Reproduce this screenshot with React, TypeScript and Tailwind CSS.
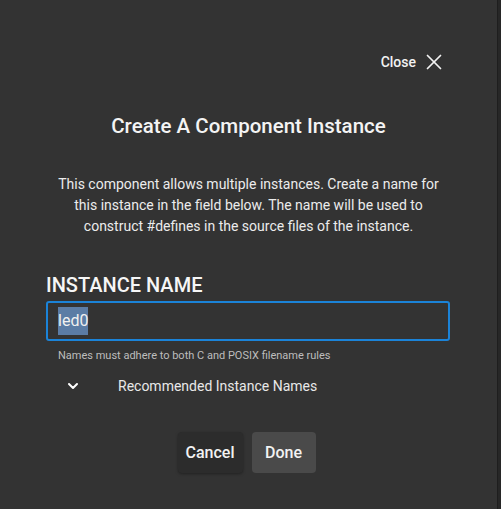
import { X, ChevronDown } from "lucide-react"

export default function App() {
  return (
    <div className="flex h-[509px] w-[501px] overflow-hidden bg-[#333333] font-['Roboto',sans-serif] text-white">
      {/* Dialog */}
      <div className="flex w-[497px] flex-col px-[46px]">
        <div className="flex h-[20px] justify-end mt-[52px] pr-[4px]">
          <button className="flex items-center gap-[5px] text-[14px] font-medium text-[#f2f2f2]">
            Close
            <X className="-my-[3px] h-[26px] w-[26px]" strokeWidth={1.6} />
          </button>
        </div>

        <h1 className="mt-[42px] text-center text-[20.5px] font-medium leading-[24px] text-[#f4f4f4]">
          Create A Component Instance
        </h1>

        <p className="mt-[36px] text-center text-[14px] leading-[21px] text-[#ececec]">
          This component allows multiple instances. Create a name for this instance in the field below. The name will be
          used to construct #defines in the source files of the instance.
        </p>

        <label className="mt-[36px] text-[20px] font-medium leading-[24px] text-[#f6f6f6]">INSTANCE NAME</label>
        <div className="mt-[4px] flex h-[40px] w-[404px] items-center rounded-[3px] border-2 border-[#1b83d8] px-[10px]">
          <span className="bg-[#5b7ca5] text-[16px] leading-[28px] text-[#f0f0f0]">led0</span>
        </div>
        <div className="mt-[8px] pl-[12px] text-[11px] leading-[14px] text-[#bdbdbd]">
          Names must adhere to both C and POSIX filename rules
        </div>

        <div className="mt-[13px] flex items-center">
          <ChevronDown className="ml-[19px] h-[16px] w-[16px] text-white" strokeWidth={3} />
          <span className="ml-[37px] text-[14px] leading-[20px] text-[#e8e8e8]">Recommended Instance Names</span>
        </div>

        <div className="mt-[36px] flex justify-center gap-[9px] pl-[2px] pr-[6px]">
          <button className="h-[41px] w-[65px] rounded-[4px] bg-[#2c2c2c] text-[16px] font-medium text-[#f2f2f2] shadow-[0_1px_3px_rgba(0,0,0,0.35)]">
            Cancel
          </button>
          <button className="h-[41px] w-[64px] rounded-[4px] bg-[#4a4a4a] text-[16px] font-medium text-[#f2f2f2]">
            Done
          </button>
        </div>
      </div>

      {/* Underlying page sliver */}
      <div className="flex w-[4px] flex-col border-l border-[#1e1e1e] bg-[#272727]" />
    </div>
  )
}
